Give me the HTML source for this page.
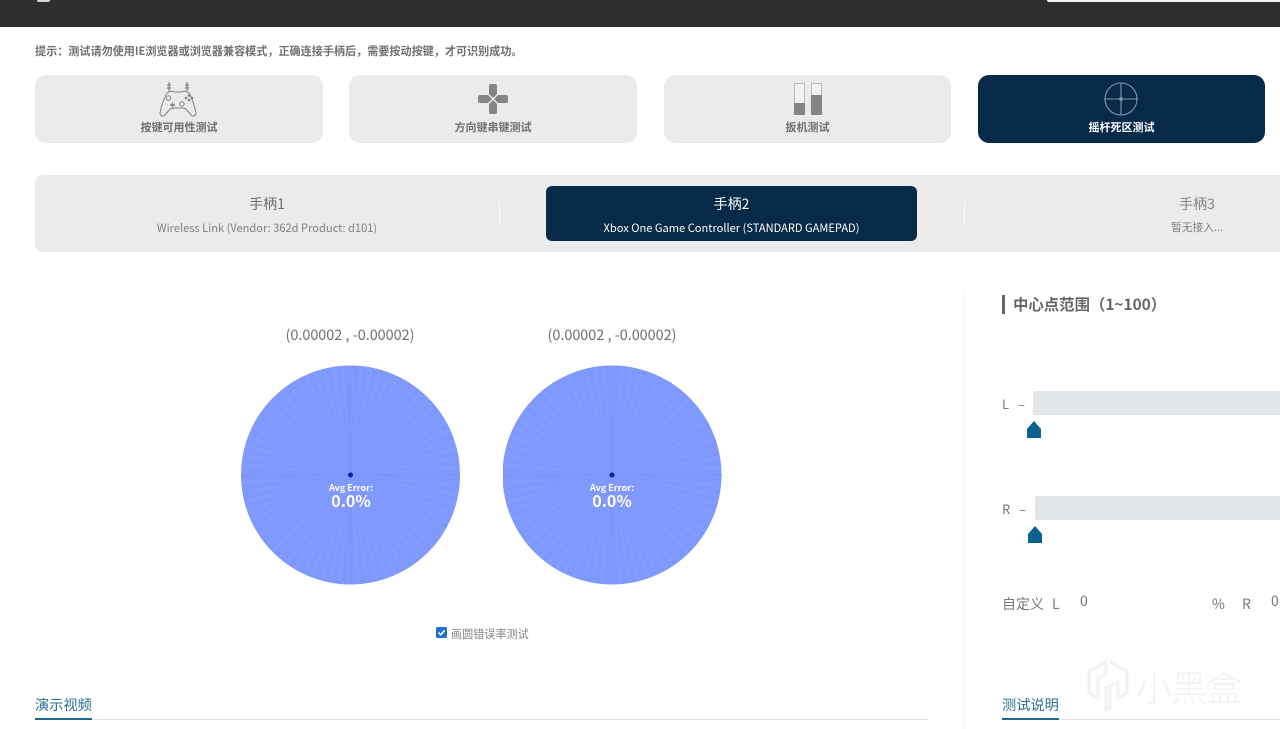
<!DOCTYPE html>
<html lang="zh"><head><meta charset="utf-8"><title>摇杆死区测试</title>
<style>
html,body{margin:0;padding:0;background:#fff}
body{width:1280px;height:729px;overflow:hidden;position:relative;font-family:"Liberation Sans","Noto Sans CJK SC",sans-serif;color:#666}
div,span,svg{position:absolute}
.t{white-space:nowrap;text-align:center;line-height:1}
.card{top:75px;height:68px;background:#ebebeb;border-radius:11px}
.lbl{top:121px;height:13px;font-size:11px;font-weight:700;color:#707070;font-family:"Noto Sans CJK SC",sans-serif}
.n{font-family:"Noto Sans CJK SC",sans-serif}
.co{top:327px;font-size:14.4px;color:#707070;width:200px;font-family:"Noto Sans CJK SC",sans-serif}
.err{color:#fff;width:80px;font-family:"Noto Sans CJK SC",sans-serif;font-weight:700}
</style></head><body>
<div style="left:0;top:0;width:1280px;height:27px;background:#2e2e2e"></div>
<div style="left:37px;top:0;width:13px;height:2px;background:#d8d8d8;border-radius:0 0 6px 6px"></div>
<div style="left:1047px;top:0;width:233px;height:2px;background:#f4f4f4;border-radius:0 0 0 3px"></div>

<div class="t n" style="left:35px;top:45px;font-size:11.1px;font-weight:700;color:#707070;height:13px;line-height:13px">提示&#xFF1A;测试请勿使用IE浏览器或浏览器兼容模式&#xFF0C;正确连接手柄后&#xFF0C;需要按动按键&#xFF0C;才可识别成功。</div>

<div class="card" style="left:35px;width:288px"></div>
<div class="card" style="left:349px;width:288px"></div>
<div class="card" style="left:664px;width:287px"></div>
<div class="card" style="left:978px;width:287px;background:#062a47"></div>

<svg style="left:155px;top:80px" width="46" height="38" viewBox="0 0 46 38" fill="none" stroke="#808080" stroke-width="1">
<path d="M14 2v9M32 2v9M12 5h4M30 5h4M12 8h4M30 8h4" stroke-width="1.2"/>
<path d="M12 13c3-2 6-2 8-1h6c2-1 5-1 8 1 2 3 6 14 7 20 0 3-3 4-5 2l-5-6c-2-1-3-1-5-1H20c-2 0-3 0-5 1l-5 6c-2 2-5 1-5-2 1-6 5-17 7-20z"/>
<circle cx="13.500" cy="18" r="2.200"/><circle cx="27" cy="24" r="2.200"/>
<path d="M15 25h5M17.500 22.500v5" stroke-width="1.400"/>
<circle cx="31" cy="18" r=".8" fill="#808080"/><circle cx="34" cy="15.500" r=".8" fill="#808080"/><circle cx="34" cy="20" r=".8" fill="#808080"/><circle cx="37" cy="18" r=".8" fill="#808080"/>
</svg>
<svg style="left:477px;top:83px" width="32" height="32" viewBox="0 0 32 32" fill="#858585">
<path d="M12 3q0-2 2-2h4q2 0 2 2v8l-4 4-4-4zM12 29q0 2 2 2h4q2 0 2-2v-8l-4-4-4 4zM3 12q-2 0-2 2v4q0 2 2 2h8l4-4-4-4zM29 12q2 0 2 2v4q0 2-2 2h-8l-4-4 4-4z"/>
</svg>
<svg style="left:794px;top:83px" width="30" height="33" viewBox="0 0 30 33">
<rect x=".5" y=".5" width="10" height="31" fill="#f2f2f2" stroke="#bbb"/><rect x="0" y="20" width="11" height="12" fill="#858585"/>
<rect x="17.500" y=".5" width="10" height="31" fill="#f2f2f2" stroke="#bbb"/><rect x="17" y="12" width="11" height="20" fill="#858585"/>
</svg>
<svg style="left:1103px;top:82px" width="36" height="34" viewBox="0 0 36 34" fill="none" stroke="#7f97aa" stroke-width="1.100">
<circle cx="18" cy="17" r="16"/><path d="M1 17h34M18 1v32"/><circle cx="18" cy="17" r="1.300" fill="#7f97aa"/>
</svg>

<div class="t lbl" style="left:35px;width:288px;line-height:13px">按键可用性测试</div>
<div class="t lbl" style="left:349px;width:288px;line-height:13px">方向键串键测试</div>
<div class="t lbl" style="left:664px;width:287px;line-height:13px">扳机测试</div>
<div class="t lbl" style="left:978px;width:287px;line-height:13px;color:#fff">摇杆死区测试</div>

<div style="left:35px;top:175px;width:1260px;height:77px;background:#ebebeb;border-radius:8px"></div>
<div style="left:499px;top:201px;width:1px;height:24px;background:#fafafa"></div>
<div style="left:964px;top:201px;width:1px;height:24px;background:#fafafa"></div>
<div style="left:546px;top:186px;width:371px;height:55px;background:#062a47;border-radius:6px"></div>

<div class="t n" style="left:35px;width:464px;top:196px;font-size:14px;line-height:16px;color:#6e6e6e">手柄1</div>
<div class="t n" style="left:35px;width:464px;top:221px;font-size:11.1px;line-height:14px;color:#808080">Wireless Link (Vendor: 362d Product: d101)</div>
<div class="t n" style="left:546px;width:371px;top:196px;font-size:14px;line-height:16px;color:#fff">手柄2</div>
<div class="t n" style="left:546px;width:371px;top:221px;font-size:11.1px;line-height:14px;color:#fff">Xbox One Game Controller (STANDARD GAMEPAD)</div>
<div class="t n" style="left:1097px;width:200px;top:196px;font-size:14px;line-height:16px;color:#858585">手柄3</div>
<div class="t n" style="left:1097px;width:200px;top:221px;font-size:10.7px;line-height:14px;color:#808080">暂无接入...</div>

<div class="t co" style="left:250px;line-height:16px">(0.00002 , -0.00002)</div>
<div class="t co" style="left:512px;line-height:16px">(0.00002 , -0.00002)</div>

<svg style="left:241px;top:365px" width="220" height="220" viewBox="0 0 220 220">
<circle cx="109.500" cy="110" r="109.500" fill="#7f98fd"/>
<circle cx="109.500" cy="110" r="54" fill="none" stroke="#849dfd" stroke-width="108" stroke-dasharray="1.200 3.510"/>
<path d="M109.500 1v218M1 110h218" stroke="#7a92f4" stroke-width="1"/>
<circle cx="109.500" cy="110" r="2.500" fill="#0a22a8"/>
</svg>
<svg style="left:503px;top:365px" width="220" height="220" viewBox="0 0 220 220">
<circle cx="109" cy="110" r="109.500" fill="#7f98fd"/>
<circle cx="109" cy="110" r="54" fill="none" stroke="#849dfd" stroke-width="108" stroke-dasharray="1.200 3.510"/>
<path d="M109 1v218M1 110h218" stroke="#7a92f4" stroke-width="1"/>
<circle cx="109" cy="110" r="2.500" fill="#0a22a8"/>
</svg>
<div class="t err" style="left:311px;top:482px;font-size:9px;line-height:11px">Avg Error:</div>
<div class="t err" style="left:311px;top:491px;font-size:16px;line-height:18px">0.0%</div>
<div class="t err" style="left:572px;top:482px;font-size:9px;line-height:11px">Avg Error:</div>
<div class="t err" style="left:572px;top:491px;font-size:16px;line-height:18px">0.0%</div>

<svg style="left:436px;top:627px" width="11" height="11" viewBox="0 0 11 11"><rect width="11" height="11" rx="1.500" fill="#1f6fd0"/><path d="M2.500 5.500l2.200 2.300 4-4.500" fill="none" stroke="#fff" stroke-width="1.600"/></svg>
<div class="t n" style="left:451px;top:627px;font-size:11.1px;line-height:14px;color:#858585">画圆错误率测试</div>

<div style="left:35px;top:719px;width:893px;height:1px;background:#e2e4e6"></div>
<div style="left:35px;top:718px;width:57px;height:2px;background:#1f6a8c"></div>
<div class="t n" style="left:35px;top:696px;font-size:14.2px;line-height:18px;color:#2a6f8f">演示视频</div>

<div style="left:964px;top:292px;width:1px;height:437px;background:#f3f3f3"></div>
<div style="left:1002px;top:295px;width:3px;height:19px;background:#666"></div>
<div class="t n" style="left:1013px;top:295px;font-size:15.4px;line-height:18px;font-weight:700;color:#666">中心点范围&#xFF08;1~100&#xFF09;</div>

<div class="t n" style="left:1002px;top:396px;font-size:13px;line-height:15px;color:#777;letter-spacing:3px">L –</div>
<div style="left:1033px;top:391px;width:247px;height:24px;background:#e2e5e9;border-radius:2px 0 0 2px"></div>
<svg style="left:1027px;top:421px" width="14" height="17" viewBox="0 0 14 17"><path d="M7 0l7 8v9H0V8z" fill="#0b628f"/></svg>

<div class="t n" style="left:1002px;top:501px;font-size:13px;line-height:15px;color:#777;letter-spacing:3px">R –</div>
<div style="left:1035px;top:496px;width:245px;height:24px;background:#e2e5e9;border-radius:2px 0 0 2px"></div>
<svg style="left:1028px;top:526px" width="14" height="17" viewBox="0 0 14 17"><path d="M7 0l7 8v9H0V8z" fill="#0b628f"/></svg>

<div class="t n" style="left:1002px;top:596px;font-size:14px;line-height:17px;color:#777">自定义</div>
<div class="t n" style="left:1052px;top:596px;font-size:14px;line-height:16px;color:#777">L</div>
<div class="t n" style="left:1080px;top:593px;font-size:14px;line-height:16px;color:#777">0</div>
<div class="t n" style="left:1212px;top:596px;font-size:14px;line-height:16px;color:#777">%</div>
<div class="t n" style="left:1242px;top:596px;font-size:14px;line-height:16px;color:#777">R</div>
<div class="t n" style="left:1271px;top:593px;font-size:14px;line-height:16px;color:#777">0</div>

<svg style="left:1086px;top:660px" width="44" height="52" viewBox="0 0 44 52" fill="none" stroke="#f1f1f1" stroke-width="3">
<path d="M20 2L3 11v22l9 5V18l8-4zM24 2l17 9v22l-9 5V22l-8 4v22l-4 2V26"/>
</svg>
<div class="t n" style="left:1136px;top:666px;font-size:36px;line-height:40px;font-weight:300;color:#f1f1f1;letter-spacing:-1px">小黑盒</div>

<div style="left:1002px;top:719px;width:278px;height:1px;background:#e2e4e6"></div>
<div style="left:1002px;top:718px;width:57px;height:2px;background:#1f6a8c"></div>
<div class="t n" style="left:1002px;top:696px;font-size:14.2px;line-height:18px;color:#2a6f8f">测试说明</div>
</body></html>
